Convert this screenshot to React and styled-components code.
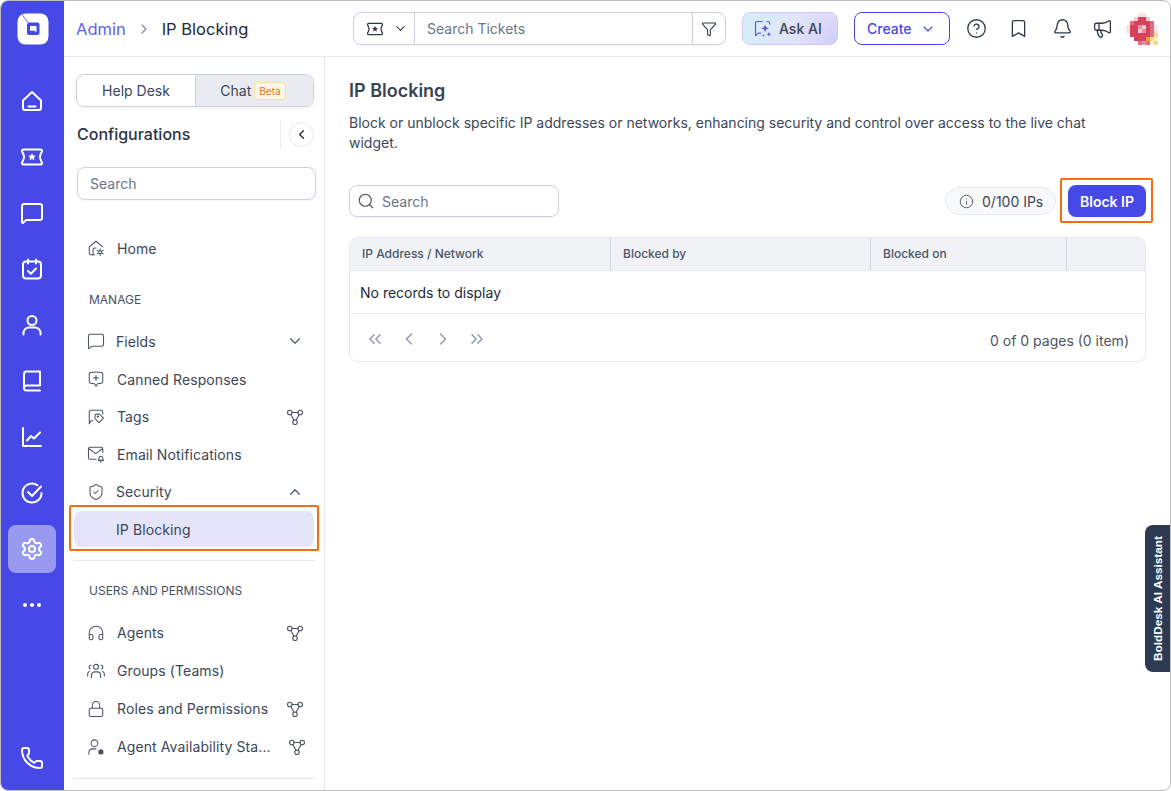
import React from 'react'
import styled, { createGlobalStyle } from 'styled-components'
import {
  Settings, Phone, CircleHelp, Bookmark, Bell, Megaphone, Search, Info,
  ChevronDown, ChevronUp, ChevronLeft, ChevronRight, ChevronsLeft, ChevronsRight,
  Funnel, Headphones, Lock, MessageSquare, ShieldCheck
} from 'lucide-react'

const primary = '#4649e5'
const line = '#e6e8ee'

const GlobalStyle = createGlobalStyle`
  html, body {
    margin: 0;
    background: #fff;
    font-family: Inter, "Noto Sans", sans-serif;
  }
  * { box-sizing: border-box; }
`

const Frame = styled.div`
  position: relative;
  display: flex;
  width: 1171px;
  height: 791px;
  border: 1px solid #bdbdbd;
  border-radius: 8px;
  overflow: hidden;
  background: #fff;
`

const Rail = styled.nav`
  display: flex;
  flex: 0 0 63px;
  flex-direction: column;
  align-items: center;
  padding: 12px 1px 8px 0;
  background: ${primary};
  color: #fff;
`

const Logo = styled.div`
  display: flex;
  height: 32px;
  margin: 0 0 32px 1px;
`

const RailItem = styled.div`
  display: flex;
  align-items: center;
  justify-content: center;
  width: 48px;
  height: 48px;
  margin-bottom: 8px;
  border-radius: 8px;
  background: ${p => (p.$active ? '#989af0' : 'transparent')};
  ${p => p.$bottom && 'margin-top: auto; margin-bottom: 0;'}
`

const Body = styled.div`
  display: flex;
  flex: 1;
  flex-direction: column;
  min-width: 0;
`

const TopBar = styled.header`
  display: flex;
  flex: 0 0 56px;
  align-items: center;
  border-bottom: 1px solid ${line};
`

const Crumbs = styled.div`
  display: flex;
  flex: 0 0 289px;
  align-items: center;
  padding-left: 12px;
  font-size: 16.5px;
  color: #1f2937;
`

const CrumbLink = styled.span`
  color: #5f62e8;
`

const CrumbArrow = styled(ChevronRight)`
  margin: 0 10px;
  color: #7d8597;
`

const TicketSearch = styled.div`
  display: flex;
  flex: 0 0 373px;
  height: 33px;
  border: 1px solid #ccd0de;
  border-radius: 8px;
  box-shadow: 0 1px 2px rgba(30, 40, 70, 0.05);
`

const TicketType = styled.div`
  display: flex;
  flex: 0 0 61px;
  align-items: center;
  gap: 9px;
  padding-left: 12px;
  border-right: 1px solid #ccd0de;
  color: #2f3847;
`

const TicketInput = styled.input`
  flex: 1;
  min-width: 0;
  padding: 0 12px;
  border: 0;
  outline: 0;
  background: transparent;
  font: 14px Inter, sans-serif;
  &::placeholder { color: #6b7485; opacity: 1; }
`

const FilterBox = styled.div`
  display: flex;
  flex: 0 0 33px;
  align-items: center;
  justify-content: center;
  border-left: 1px solid #ccd0de;
  color: #2f3847;
`

const AskAi = styled.button`
  display: flex;
  align-items: center;
  gap: 6px;
  width: 96px;
  height: 33px;
  margin-left: 16px;
  padding: 0 0 0 10px;
  border: 1px solid #d8c4f6;
  border-radius: 8px;
  background:
    radial-gradient(circle at 100% 100%, #ccd0fb 0%, rgba(204, 208, 251, 0) 45%),
    linear-gradient(115deg, #d2f0f7 0%, #dde6f9 45%, #f0dbf8 100%);
  color: #3b4354;
  font: 450 14px Inter, sans-serif;
`

const AskAiIcon = styled.span`
  display: flex;
  color: #6a4fd8;
`

const CreateButton = styled.button`
  display: flex;
  align-items: center;
  justify-content: space-between;
  width: 96px;
  height: 33px;
  margin-left: 16px;
  padding: 0 13px 0 12px;
  border: 1px solid ${primary};
  border-radius: 8px;
  background: #fff;
  color: ${primary};
  font: 450 14px Inter, sans-serif;
`

const TopIcons = styled.div`
  display: flex;
  align-items: center;
  gap: 21px;
  margin-left: 16px;
  color: #2f3847;
`

const BellIcon = styled(Bell)`
  margin: 0 -2px 0 2px;
`

const Avatar = styled.svg`
  display: block;
  width: 32px;
  height: 32px;
  margin-left: -8px;
`

const Columns = styled.div`
  display: flex;
  flex: 1;
  min-height: 0;
`

const Side = styled.aside`
  flex: 0 0 261px;
  padding: 17px 10px 0 12px;
  border-right: 1px solid ${line};
  overflow: hidden;
`

const Toggle = styled.div`
  display: grid;
  grid-template-columns: 118px 1fr;
  width: 238px;
  height: 33px;
  border: 1px solid #ccd0de;
  border-radius: 8px;
  box-shadow: 0 2px 4px rgba(30, 40, 70, 0.05);
  overflow: hidden;
`

const ToggleTab = styled.div`
  display: flex;
  align-items: center;
  justify-content: center;
  gap: 3px;
  font-size: 14px;
  color: #3c4657;
  ${p => p.$active && `background: #e9ebf0; border-left: 1px solid #ccd0de; padding-right: 3px;`}
`

const BetaTag = styled.span`
  padding: 2px 4px;
  border: 1px solid #fbdc9f;
  border-radius: 4px;
  background: #fff7e6;
  color: #e8710a;
  font-size: 10px;
  line-height: 12px;
`

const TitleRow = styled.div`
  display: flex;
  align-items: center;
  height: 32px;
  margin-top: 11px;
  padding-left: 1px;
`

const SideTitle = styled.h2`
  flex: 1;
  margin: 0;
  font-size: 16px;
  font-weight: 450;
  color: #2b3443;
`

const CollapseWrap = styled.div`
  display: flex;
  align-items: center;
  height: 28px;
  padding-left: 8px;
  border-left: 1px solid ${line};
`

const CollapseButton = styled.div`
  display: flex;
  align-items: center;
  justify-content: center;
  width: 25px;
  height: 25px;
  border: 1px solid ${line};
  border-radius: 50%;
  color: #1f2937;
`

const SideSearch = styled.input`
  display: block;
  width: 239px;
  height: 33px;
  margin: 17px 0 29px 1px;
  padding: 0 12px;
  border: 1px solid #ccd0de;
  border-radius: 8px;
  outline: 0;
  font: 14px Inter, sans-serif;
  box-shadow: 0 1px 2px rgba(30, 40, 70, 0.05);
  &::placeholder { color: #6b7485; opacity: 1; }
`

const NavRow = styled.div`
  display: flex;
  align-items: center;
  gap: ${p => (p.$tight ? 10 : 11)}px;
  width: 238px;
  height: ${p => (p.$tall ? 38 : 37.6)}px;
  padding: 0 10px;
  font-size: 14px;
  letter-spacing: 0.1px;
  color: #3c4657;
  white-space: nowrap;
`

const NavIcon = styled.span`
  display: flex;
  flex: 0 0 20px;
  justify-content: center;
  color: #4b5565;
`

const NavText = styled.span`
  flex: 1;
`

const NavEnd = styled.span`
  display: flex;
  color: #4b5565;
  ${p => p.$shift && 'margin-right: -2px;'}
`

const SectionLabel = styled.div`
  height: 16px;
  margin: ${p => p.$top}px 0 ${p => p.$bottom}px 13px;
  font-size: 12px;
  line-height: 16px;
  color: #475062;
`

const SubItem = styled.div`
  position: relative;
  display: flex;
  align-items: center;
  width: 240px;
  height: 36px;
  margin: 0.3px 0 0 -2px;
  padding: 2px 0 0 42px;
  border-radius: 8px;
  background: #e4e5f9;
  font-size: 14px;
  letter-spacing: 0.1px;
  color: #3c4657;
  &::after {
    content: '';
    position: absolute;
    inset: -6px -5px -4px -5px;
    border: 2px solid #f56f12;
    border-radius: 2px;
  }
`

const SideRule = styled.div`
  width: 242px;
  height: 1px;
  margin: ${p => p.$top}px 0 0 -3px;
  background: ${line};
`

const Main = styled.main`
  flex: 1;
  min-width: 0;
  padding: 22px 24px 0;
`

const PageTitle = styled.h1`
  margin: 0;
  font-size: 18px;
  font-weight: 600;
  line-height: 24px;
  color: #3a4354;
`

const Description = styled.p`
  width: 770px;
  margin: 10px 0 32px;
  font-size: 14px;
  line-height: 20px;
  color: #3c4657;
`

const Toolbar = styled.div`
  display: flex;
  align-items: center;
  height: 32px;
  margin-bottom: 20px;
`

const SearchBox = styled.div`
  display: flex;
  align-items: center;
  gap: 5px;
  width: 210px;
  height: 32px;
  margin-right: auto;
  padding-left: 7px;
  border: 1px solid #ccd0de;
  border-radius: 8px;
  box-shadow: 0 1px 2px rgba(30, 40, 70, 0.05);
  color: #4b5565;
`

const SearchInput = styled.input`
  flex: 1;
  min-width: 0;
  border: 0;
  outline: 0;
  background: transparent;
  font: 14px Inter, sans-serif;
  &::placeholder { color: #6b7485; opacity: 1; }
`

const CountPill = styled.div`
  display: flex;
  align-items: center;
  gap: 8px;
  width: 111px;
  height: 28px;
  margin-right: 12px;
  padding-left: 13px;
  border: 1px solid ${line};
  border-radius: 14px;
  background: #f8f9fb;
  font-size: 14px;
  color: #3c4657;
  svg { color: #4b5565; }
`

const BlockButton = styled.button`
  position: relative;
  width: 78px;
  height: 32px;
  padding: 0;
  border: 0;
  border-radius: 8px;
  background: ${primary};
  color: #fff;
  font: 600 14px Inter, sans-serif;
  &::after {
    content: '';
    position: absolute;
    inset: -7px -7px -6px -8px;
    border: 2px solid #f56f12;
    border-radius: 2px;
  }
`

const Table = styled.div`
  border: 1px solid ${line};
  border-radius: 8px;
  overflow: hidden;
`

const HeadRow = styled.div`
  display: grid;
  grid-template-columns: 261px 260px 196px 1fr;
  height: 33px;
  border-bottom: 1px solid ${line};
  background: #f1f2f6;
`

const HeadCell = styled.div`
  display: flex;
  align-items: center;
  padding: 0 0 1px 12px;
  border-right: ${p => (p.$last ? 0 : '1px solid #d3d6df')};
  font-size: 12px;
  font-weight: 500;
  color: #4b5565;
`

const EmptyRow = styled.div`
  display: flex;
  align-items: center;
  height: 43px;
  padding-left: 10px;
  border-bottom: 1px solid ${line};
  font-size: 14px;
  color: #1f2937;
`

const Pager = styled.div`
  display: flex;
  align-items: center;
  justify-content: space-between;
  height: 47px;
  padding: 0 16px 0 15px;
`

const PagerIcons = styled.div`
  display: flex;
  gap: 14px;
  padding-top: 2px;
  color: #8f98ad;
`

const PagerText = styled.span`
  padding-top: 6px;
  font-size: 14px;
  color: #4b5565;
`

const AssistantTab = styled.div`
  position: absolute;
  top: 524px;
  right: 0;
  display: flex;
  align-items: center;
  justify-content: center;
  width: 25px;
  height: 147px;
  border-radius: 0 8px 8px 0;
  background: #2c3a52;
  color: #fff;
  font: 700 11.8px "Liberation Sans", Arial, sans-serif;
  writing-mode: vertical-rl;
  transform: rotate(180deg);
`

const Svg = ({ size = 24, sw = 1.5, children }) => (
  <svg width={size} height={size} viewBox="0 0 24 24" fill="none" stroke="currentColor" strokeWidth={sw} strokeLinecap="round" strokeLinejoin="round">
    {children}
  </svg>
)

const LogoMark = () => (
  <svg width="32" height="32" viewBox="0 0 32 32">
    <rect x="0.5" y="0.5" width="31" height="31" rx="8" fill="#fff" />
    <path d="M5 1.500 L11 9.500" stroke={primary} strokeWidth="0.8" />
    <rect x="10" y="9.500" width="12.500" height="12.500" rx="2" fill={primary} />
    <path d="M13 13h6.500v6.500l-2-1.800H13z" fill="#fff" />
  </svg>
)

const HomeIcon = () => (
  <Svg sw={2}>
    <path d="M3 11.500 12 3l9 8.500V19a2 2 0 0 1-2 2H5a2 2 0 0 1-2-2z" />
    <path d="M8.500 17.500h7" />
  </Svg>
)

const TicketStar = ({ size = 24, sw = 2 }) => (
  <Svg size={size} sw={sw}>
    <path d="M3.500 4.500h17a1.500 1.500 0 0 1 1.500 1.500c0 1.500-2 2.500-2 6s2 4.500 2 6a1.500 1.500 0 0 1-1.500 1.500h-17A1.500 1.500 0 0 1 2 18c0-1.500 2-2.500 2-6S2 7.500 2 6a1.500 1.500 0 0 1 1.500-1.500z" />
    <path d="m12 8 1.200 2.400 2.700.4-2 1.800.5 2.600-2.400-1.300-2.400 1.300.5-2.600-2-1.800 2.700-.4z" fill="currentColor" stroke="none" />
  </Svg>
)

const CalendarCheck = () => (
  <Svg sw={2}>
    <rect x="3" y="4.500" width="18" height="17" rx="3" />
    <path d="M8 2.500v4M16 2.500v4M8 14l3 2.800 5-5.300" />
  </Svg>
)

const UserIcon = () => (
  <Svg sw={2}>
    <circle cx="12" cy="7.500" r="4.500" />
    <path d="M3.500 21.500v-1.500a5.500 5.500 0 0 1 5.500-5.500h6a5.500 5.500 0 0 1 5.500 5.500v1.500" />
  </Svg>
)

const BookIcon = () => (
  <Svg sw={2}>
    <path d="M4 18.500V5a2.500 2.500 0 0 1 2.500-2.500H20v14H6.500a2.500 2.500 0 0 0 0 5H20" />
  </Svg>
)

const ChartIcon = () => (
  <Svg sw={2}>
    <path d="M3 3v18h18" />
    <path d="m7 15.500 4-4.500 3 2.500 6-6" />
  </Svg>
)

const CheckRing = () => (
  <Svg sw={2}>
    <path d="M21.500 12a9.500 9.500 0 1 1-4-7.700" />
    <path d="m8 11 4 4 9-9.500" />
  </Svg>
)

const Dots = () => (
  <svg width="20" height="6" viewBox="0 0 20 6" fill="#fff">
    <circle cx="3" cy="3" r="2" />
    <circle cx="10" cy="3" r="2" />
    <circle cx="17" cy="3" r="2" />
  </svg>
)

const Sparkle = () => (
  <Svg size={20} sw={1.4}>
    <path d="M11 3H5a2 2 0 0 0-2 2v15l3.500-3H9" />
    <path d="M17 3h1a2 2 0 0 1 2 2v1" />
    <path d="M14.500 6.500 15.800 10l3.200 1.200-3.200 1.300-1.300 3.500-1.300-3.500-3.200-1.300 3.200-1.200z" fill="currentColor" stroke="none" />
    <path d="M19 15.500l.8 2 2 .8-2 .8-.8 2-.8-2-2-.8 2-.8zM12.500 18l.5 1.500 1.500.5-1.500.5-.5 1.500-.5-1.500-1.500-.5 1.500-.5z" fill="currentColor" stroke="none" />
  </Svg>
)

const Nodes = () => (
  <Svg size={18} sw={1.5}>
    <circle cx="5" cy="6" r="3" />
    <circle cx="19" cy="6" r="3" />
    <circle cx="12" cy="19" r="3" />
    <path d="M8 6h8M6.400 8.700l4.200 7.700M17.600 8.700l-4.200 7.700" />
  </Svg>
)

const HomeGear = () => (
  <Svg size={18} sw={1.4}>
    <path d="M10 21H5a2 2 0 0 1-2-2v-8.500L12 3l9 7.500" />
    <path d="M8 21v-6a3 3 0 0 1 3-3h1" />
    <circle cx="17.500" cy="17.500" r="2" />
    <path d="M17.500 13v1.500M17.500 20.500V22M13.500 15.200l1.300.8M20.200 19l1.300.8M13.500 19.800l1.300-.8M20.200 16l1.300-.8" />
  </Svg>
)

const ChatPlus = () => (
  <Svg size={18} sw={1.4}>
    <path d="M6 3h12a3 3 0 0 1 3 3v9a3 3 0 0 1-3 3h-3.500L12 21.500 9.500 18H6a3 3 0 0 1-3-3V6a3 3 0 0 1 3-3z" />
    <path d="M12 7.500v6M9 10.500h6" />
  </Svg>
)

const TagChat = () => (
  <Svg size={18} sw={1.4}>
    <path d="M8 17H5.500L3 21V5a2 2 0 0 1 2-2h14a2 2 0 0 1 2 2v3" />
    <path d="m11 8.500 5.500-.5 5.500 5.500-6 6-5.500-5.500z" />
    <circle cx="14.500" cy="11.500" r=".8" />
  </Svg>
)

const MailBell = () => (
  <Svg size={18} sw={1.4}>
    <path d="M12 19H4a2 2 0 0 1-2-2V5a2 2 0 0 1 2-2h15a2 2 0 0 1 2 2v5" />
    <path d="m2.500 5 9 6.500L20.500 5" />
    <path d="M15 20.500h7c-1-1-1-2-1-3a2.500 2.500 0 0 0-5 0c0 1 0 2-1 3zM18 22.500h1" />
  </Svg>
)

const Team = () => (
  <Svg size={20} sw={1.3}>
    <circle cx="12" cy="7" r="3" />
    <path d="M6.500 20v-3a4 4 0 0 1 4-4h3a4 4 0 0 1 4 4v3" />
    <path d="M6 5.200a2.400 2.400 0 0 0-1 4.500M2 18v-2.500A3.500 3.500 0 0 1 4 12.500M18 5.200a2.400 2.400 0 0 1 1 4.500M22 18v-2.500a3.500 3.500 0 0 0-2-3" />
  </Svg>
)

const AgentStatus = () => (
  <Svg size={18} sw={1.4}>
    <circle cx="10" cy="7" r="4.500" />
    <path d="M2.500 21.500V19a4.500 4.500 0 0 1 4.500-4.500h5" />
    <circle cx="18.500" cy="18.500" r="3.500" fill="currentColor" stroke="none" />
  </Svg>
)

// pixelated profile picture, one string per row of blocks
const palette = {
  a: '#d6425c', b: '#dd6f83', c: '#f3ccd0', d: '#e48ea6', e: '#f8e3e3',
  f: '#e8a521', g: '#f5d98f', h: '#fbeecb', i: '#cf3f5a'
}
const avatarRows = [
  '...ee...',
  '..caac..',
  '.baaaab.',
  'eaadcabe',
  'eaacdabe',
  '.aaaaabg',
  '..iaafgh',
  '...bdbhg'
]

const AvatarMosaic = () => (
  <Avatar viewBox="0 0 8 8" shapeRendering="crispEdges">
    {avatarRows.map((row, y) =>
      row.split('').map((c, x) =>
        c === '.' ? null : <rect key={`${x}-${y}`} x={x} y={y} width="1" height="1" fill={palette[c]} />
      )
    )}
  </Avatar>
)

const manageRows = [
  { label: 'Fields', icon: <MessageSquare size={18} strokeWidth={1.4} />, end: <ChevronDown size={18} strokeWidth={1.5} />, tight: true },
  { label: 'Canned Responses', icon: <ChatPlus /> },
  { label: 'Tags', icon: <TagChat />, end: <Nodes /> },
  { label: 'Email Notifications', icon: <MailBell /> },
  { label: 'Security', icon: <ShieldCheck size={18} strokeWidth={1.4} />, end: <ChevronUp size={18} strokeWidth={1.5} />, tight: true }
]

const userRows = [
  { label: 'Agents', icon: <Headphones size={18} strokeWidth={1.4} />, end: <Nodes /> },
  { label: 'Groups (Teams)', icon: <Team /> },
  { label: 'Roles and Permissions', icon: <Lock size={18} strokeWidth={1.4} />, end: <Nodes /> },
  { label: 'Agent Availability Sta...', icon: <AgentStatus />, end: <Nodes />, shift: true }
]

const railIcons = [
  <HomeIcon />, <TicketStar />, <MessageSquare size={24} strokeWidth={2} />, <CalendarCheck />,
  <UserIcon />, <BookIcon />, <ChartIcon />, <CheckRing />
]

const renderRow = (row, tall) => (
  <NavRow key={row.label} $tight={row.tight} $tall={tall}>
    <NavIcon>{row.icon}</NavIcon>
    <NavText>{row.label}</NavText>
    {row.end && <NavEnd $shift={row.shift}>{row.end}</NavEnd>}
  </NavRow>
)

const App = () => (
  <Frame>
    <GlobalStyle />
    <Rail>
      <Logo><LogoMark /></Logo>
      {railIcons.map((icon, i) => <RailItem key={i}>{icon}</RailItem>)}
      <RailItem $active><Settings size={24} strokeWidth={2} /></RailItem>
      <RailItem><Dots /></RailItem>
      <RailItem $bottom><Phone size={24} strokeWidth={2} /></RailItem>
    </Rail>
    <Body>
      <TopBar>
        <Crumbs>
          <CrumbLink>Admin</CrumbLink>
          <CrumbArrow size={16} strokeWidth={1.7} />
          IP Blocking
        </Crumbs>
        <TicketSearch>
          <TicketType>
            <TicketStar size={18} sw={1.7} />
            <ChevronDown size={15} strokeWidth={1.7} />
          </TicketType>
          <TicketInput placeholder="Search Tickets" />
          <FilterBox><Funnel size={16} strokeWidth={1.6} /></FilterBox>
        </TicketSearch>
        <AskAi>
          <AskAiIcon><Sparkle /></AskAiIcon>
          Ask AI
        </AskAi>
        <CreateButton>
          Create
          <ChevronDown size={16} strokeWidth={1.7} />
        </CreateButton>
        <TopIcons>
          <CircleHelp size={21} strokeWidth={1.5} />
          <Bookmark size={21} strokeWidth={1.5} />
          <BellIcon size={21} strokeWidth={1.5} />
          <Megaphone size={21} strokeWidth={1.5} />
          <AvatarMosaic />
        </TopIcons>
      </TopBar>
      <Columns>
        <Side>
          <Toggle>
            <ToggleTab>Help Desk</ToggleTab>
            <ToggleTab $active>Chat <BetaTag>Beta</BetaTag></ToggleTab>
          </Toggle>
          <TitleRow>
            <SideTitle>Configurations</SideTitle>
            <CollapseWrap>
              <CollapseButton><ChevronLeft size={15} strokeWidth={2.2} /></CollapseButton>
            </CollapseWrap>
          </TitleRow>
          <SideSearch placeholder="Search" />
          {renderRow({ label: 'Home', icon: <HomeGear /> }, true)}
          <SectionLabel $top={25} $bottom={14.7}>MANAGE</SectionLabel>
          {manageRows.map(row => renderRow(row))}
          <SubItem>IP Blocking</SubItem>
          <SideRule $top={13} />
          <SectionLabel $top={22} $bottom={15}>USERS AND PERMISSIONS</SectionLabel>
          {userRows.map(row => renderRow(row, true))}
          <SideRule $top={12} />
        </Side>
        <Main>
          <PageTitle>IP Blocking</PageTitle>
          <Description>
            Block or unblock specific IP addresses or networks, enhancing security and control over access to the live chat widget.
          </Description>
          <Toolbar>
            <SearchBox>
              <Search size={18} strokeWidth={1.5} />
              <SearchInput placeholder="Search" />
            </SearchBox>
            <CountPill>
              <Info size={15} strokeWidth={1.5} />
              0/100 IPs
            </CountPill>
            <BlockButton>Block IP</BlockButton>
          </Toolbar>
          <Table>
            <HeadRow>
              <HeadCell>IP Address / Network</HeadCell>
              <HeadCell>Blocked by</HeadCell>
              <HeadCell>Blocked on</HeadCell>
              <HeadCell $last />
            </HeadRow>
            <EmptyRow>No records to display</EmptyRow>
            <Pager>
              <PagerIcons>
                <ChevronsLeft size={20} strokeWidth={1.7} />
                <ChevronLeft size={20} strokeWidth={1.7} />
                <ChevronRight size={20} strokeWidth={1.7} />
                <ChevronsRight size={20} strokeWidth={1.7} />
              </PagerIcons>
              <PagerText>0 of 0 pages (0 item)</PagerText>
            </Pager>
          </Table>
        </Main>
      </Columns>
    </Body>
    <AssistantTab>BoldDesk AI Assistant</AssistantTab>
  </Frame>
)

export default App
